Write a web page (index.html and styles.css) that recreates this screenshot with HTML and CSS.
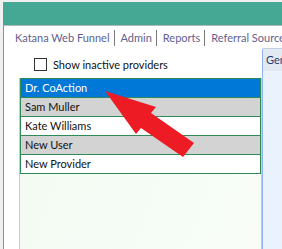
FILE: index.html
```html
<!DOCTYPE html>
<html lang="en">
<head>
    <meta charset="UTF-8">
    <title>Katana Web Funnel - Providers</title>
    <link rel="stylesheet" href="styles.css">
</head>
<body>
    <div class="window">
        <div class="title-bar"></div>

        <div class="content">
            <div class="nav">
                <a href="#">Katana Web Funnel</a>
                <a href="#">Admin</a>
                <a href="#">Reports</a>
                <a href="#">Referral Sources</a>
            </div>

            <div class="main">
                <div class="providers">
                    <label class="inactive">
                        <span class="box"></span>
                        Show inactive providers
                    </label>

                    <div class="list-panel">
                        <ul class="provider-list">
                            <li class="selected">Dr. CoAction</li>
                            <li class="alt">Sam Muller</li>
                            <li>Kate Williams</li>
                            <li class="alt">New User</li>
                            <li>New Provider</li>
                        </ul>
                    </div>
                </div>

                <div class="details">
                    <div class="tab">General</div>
                    <div class="tab-body"></div>
                </div>
            </div>
        </div>

        <!-- annotation arrow pointing at the selected provider -->
        <svg class="arrow" width="282" height="249" viewBox="0 0 282 249">
            <polygon points="105,91 156,107 151,113 194,143 183,157 141,128 136,134" fill="#ed1c24"/>
        </svg>
    </div>
</body>
</html>
```

FILE: styles.css
```css
body {
    margin: 0;
    background-color: #f0f0f0;
    font-family: Lato, "Liberation Sans", Arial, sans-serif;
    overflow: hidden;
}

.window {
    margin: 2px 0 0 3px;
    height: 247px;
    display: flex;
    flex-direction: column;
}

.title-bar {
    height: 23px;
    background-color: #44a894;
}

.content {
    flex: 1;
    background-color: #fff;
    border-top: 1px solid #b4b8b6;
    border-left: 1px solid #8f8f8f;
    display: flex;
    flex-direction: column;
}

.nav {
    display: flex;
    padding: 4px 0 0 11px;
    white-space: nowrap;
    overflow: hidden;
}

.nav a {
    color: #625f8f;
    text-decoration: none;
    font-size: 11px;
    line-height: 16px;
    padding: 0 4px 0 6px;
    border-left: 1px solid #7a7a7a;
}

.nav a:first-child {
    padding-left: 0;
    border-left: none;
}

.main {
    flex: 1;
    display: flex;
    margin-top: 2px;
}

.providers {
    width: 258px;
    display: flex;
    flex-direction: column;
}

.inactive {
    display: flex;
    align-items: center;
    gap: 6px;
    margin: 10px 0 0 30px;
    font-size: 11px;
    color: #111;
}

.inactive .box {
    width: 11px;
    height: 11px;
    border: 1px solid #333;
    background-color: #fff;
}

.list-panel {
    flex: 1;
    margin: 7px 0 0 15px;
    border-left: 1px solid #c3cad8;
    border-right: 1px solid #c3cad8;
    background: linear-gradient(110deg, #f3fbf2, #f8fdf8);
}

.provider-list {
    list-style: none;
    margin: 0;
    padding: 0;
    border: 1px solid #2e8b57;
}

.provider-list li {
    height: 18px;
    line-height: 18px;
    padding-left: 4px;
    font-size: 11px;
    color: #111;
    background-color: #fff;
    border-top: 1px solid #2e8b57;
}

.provider-list li:first-child {
    border-top: none;
}

.provider-list li.alt {
    background-color: #d3d3d3;
}

.provider-list li.selected {
    background-color: #0078d7;
    color: #fff;
}

.details {
    flex: 1;
    display: flex;
    flex-direction: column;
    overflow: hidden;
}

.tab {
    height: 22px;
    line-height: 22px;
    padding-left: 3px;
    background-color: #e3e9f3;
    border-top: 1px solid #c2cfe0;
    border-left: 1px solid #8eb4ea;
    border-radius: 2px 0 0 0;
    font-size: 11px;
    color: #1e3a78;
    white-space: nowrap;
}

.tab-body {
    flex: 1;
    background-color: #eaf2fd;
    border-left: 1px solid #8eb4ea;
}

.arrow {
    position: absolute;
    top: 0;
    left: 0;
}
```
